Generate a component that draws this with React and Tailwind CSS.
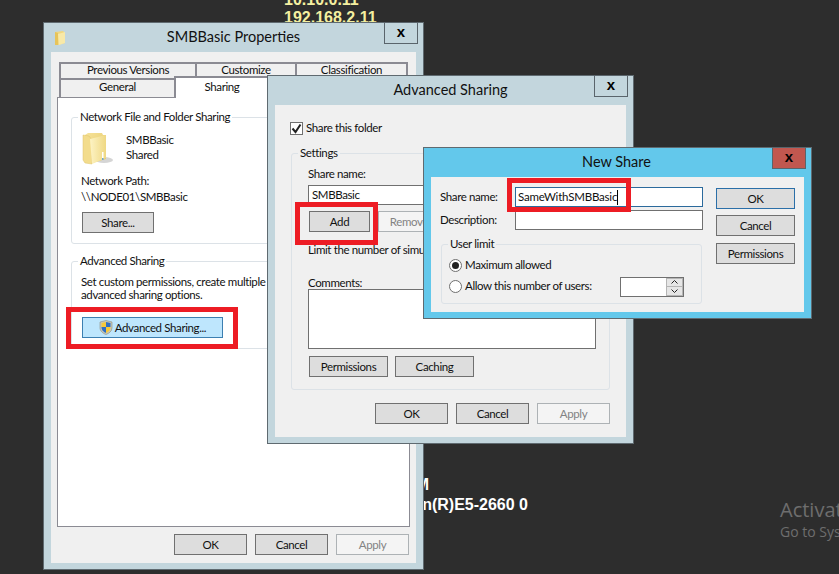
const Btn = ({ children, className = "", disabled, blue, focus }) => {
  let look = "border-[#707070] bg-[#dddddd] text-[#111]";
  if (disabled) look = "border-[#adb2b5] bg-[#f4f4f4] text-[#838383]";
  if (blue) look = "border-[#3c7fb1] bg-[#bee6fd] text-[#111]";
  if (focus) look = "border-[#2b6fa8] bg-[#dddddd] text-[#111]";
  return (
    <div className={`flex h-[21px] items-center justify-center border pt-px text-[11.5px] leading-none ${look} ${className}`}>
      {children}
    </div>
  );
};

const Group = ({ title, bg, className = "", children }) => (
  <div className={`relative rounded-[3px] border border-[#dce2e7] ${className}`}>
    <span className={`absolute -top-[9px] left-[6px] px-[2px] text-[11.5px] leading-[15px] text-[#111] ${bg}`}>{title}</span>
    {children}
  </div>
);

const CloseBtn = ({ red }) => (
  <div
    className={`absolute -top-px right-[5px] flex h-[22px] w-[34px] items-start justify-center border border-[#5a646b] font-['Liberation_Sans',sans-serif] text-[15px] font-bold leading-[18px] text-black ${
      red ? "bg-[#c1574f]" : "bg-[#c3d6dd]"
    }`}
  >
    x
  </div>
);

const Win = ({ className, title, titleClass, bar = "bg-[#c3d6dd]", red, children }) => (
  <div className={`absolute flex flex-col border border-[#5f6a70] ${bar} ${className}`}>
    <div className={`flex h-[29px] shrink-0 items-center justify-center pb-[2px] text-[14.5px] text-[#111] ${titleClass}`}>{title}</div>
    <CloseBtn red={red} />
    <div className="mx-[7px] mb-[6px] flex-1 bg-[#f0f0f0] tracking-[-0.38px]">{children}</div>
  </div>
);

const Folder = () => (
  <svg width="32" height="34" viewBox="0 0 32 34">
    <defs>
      <linearGradient id="fb" x1="0" x2="1" y1="0" y2="1">
        <stop offset="0" stopColor="#f7e39a" />
        <stop offset="1" stopColor="#e3c868" />
      </linearGradient>
      <linearGradient id="ff" x1="0" x2="1" y1="0" y2="0">
        <stop offset="0" stopColor="#fdf3c4" />
        <stop offset="1" stopColor="#efd883" />
      </linearGradient>
    </defs>
    <ellipse cx="22" cy="28" rx="9" ry="3" fill="#d5d5d5" />
    <path d="M3 3 L6 1 H20 L21 3 H24 V27 L10 31 H3 Z" fill="url(#fb)" />
    <path d="M1 3 L7 4 L10 8 V32 L3 31 L1 28 Z" fill="#f3dc8c" stroke="#dcc36c" strokeWidth=".5" />
    <path d="M8 7 L24 3 V26 L10 32 Z" fill="url(#ff)" />
    <rect x="20" y="20" width="1.5" height="6" fill="#fff" />
    <rect x="20" y="26" width="1.5" height="2" fill="#6aa6d8" />
  </svg>
);

const Shield = () => (
  <svg width="14" height="15" viewBox="0 0 14 15" className="mr-[2px] -mt-px">
    <path d="M7 .5 L13 2 V8 C13 11 10 13.5 7 14.5 C4 13.5 1 11 1 8 V2 Z" fill="#c9c9b8" stroke="#8d8d80" strokeWidth=".6" />
    <path d="M7 2 L11.5 3 V7 H7 Z" fill="#2f6fc4" />
    <path d="M7 2 L2.5 3 V7 H7 Z" fill="#f6c93a" />
    <path d="M2.5 7 H7 V13 C5 12 2.5 10.5 2.5 7 Z" fill="#2f6fc4" />
    <path d="M11.5 7 H7 V13 C9 12 11.5 10.5 11.5 7 Z" fill="#f6c93a" />
  </svg>
);

const Radio = ({ on }) => (
  <span className="flex h-[13px] w-[13px] shrink-0 items-center justify-center rounded-full border border-[#707070] bg-white">
    {on && <span className="h-[7px] w-[7px] rounded-full bg-[#222]" />}
  </span>
);

const Tab = ({ children, className = "", active }) => (
  <div
    className={`flex items-center justify-center border-[2px] border-b-0 border-r-0 border-[#8b8b93] text-[11.5px] leading-none text-[#111] ${
      active ? "bg-white" : "bg-[#f0f0f0]"
    } ${className}`}
  >
    {children}
  </div>
);

const RedBox = ({ className }) => <div className={`absolute z-40 border-[5px] border-[#ed1c24] ${className}`} />;

export default function App() {
  return (
    <div className="relative h-[574px] w-[839px] overflow-hidden bg-[#2d2d2d] font-['Lato',sans-serif]">
      {/* desktop info text */}
      <div className="absolute -top-[9px] left-[284px] font-['Liberation_Sans',sans-serif] text-[16px] font-bold leading-[18px] text-[#f4efa0]">
        <div>10.10.0.11</div>
        <div>192.168.2.11</div>
      </div>
      <div className="absolute left-[240px] top-[475px] w-[288px] font-['Liberation_Sans',sans-serif] text-[16px] font-bold leading-[20px] text-white">
        <div className="w-[189px] text-right">8 GB RAM</div>
        <div className="text-right">Intel(R) Xeon(R)E5-2660 0</div>
      </div>
      <div className="absolute left-[780px] top-[498px] whitespace-nowrap font-['Open_Sans',sans-serif] text-[#6e6e6e]">
        <div className="text-[20px] leading-[24px]">Activate Windows</div>
        <div className="text-[14px] leading-[19px]">Go to System in Control Panel</div>
      </div>

      {/* SMBBasic Properties */}
      <Win className="left-[43px] top-[22px] h-[548px] w-[381px] z-10" title="SMBBasic Properties">
        <svg width="14" height="16" viewBox="0 0 14 16" className="absolute left-[10px] top-[7px]">
          <path d="M1 2 L9 1 L11 3 V13 L4 15 H1 Z" fill="#f1d77e" />
          <path d="M4 4 L11 2 V13 L5 15 Z" fill="#f8e9a8" />
          <path d="M1 2 L4 3 V15 H1 Z" fill="#e7c45a" />
        </svg>
        <div className="px-[6px] pt-[10px]">
          <div className="ml-[2px] flex h-[16px]">
            <Tab className="w-[136px] pb-[2px]">Previous Versions</Tab>
            <Tab className="w-[100px] pb-[2px]">Customize</Tab>
            <Tab className="w-[113px] border-r-[2px] pb-[2px]">Classification</Tab>
          </div>
          <div className="relative z-10 ml-[2px] flex h-[19px]">
            <Tab className="w-[115px] pb-[3px]">General</Tab>
            <Tab active className="-mt-[2px] h-[22px] w-[94px] pb-[3px]">Sharing</Tab>
          </div>
          <div className="h-[430px] border-[1.5px] border-[#8b8b93] bg-white pl-[13px] pr-[10px] pt-[19px]">
            <Group title="Network File and Folder Sharing" bg="bg-white" className="h-[127px] px-[10px] text-[11.5px] leading-[15px] text-[#111]">
              <div className="flex h-[42px] pt-[14px]">
                <Folder />
                <div className="ml-[12px]">
                  <div>SMBBasic</div>
                  <div>Shared</div>
                </div>
              </div>
              <div className="-ml-px mt-[13px]">Network Path:</div>
              <div className="-ml-px mt-px">\\NODE01\SMBBasic</div>
              <Btn className="mt-[8px] w-[72px]">Share...</Btn>
            </Group>
            <Group title="Advanced Sharing" bg="bg-white" className="mt-[17px] h-[88px] px-[10px] pt-[13px] text-[11.5px] leading-[13px] text-[#111]">
              <div className="-ml-px whitespace-nowrap">Set custom permissions, create multiple</div>
              <div className="-ml-px">advanced sharing options.</div>
              <Btn blue className="mt-[16px] w-[141px]">
                <Shield />
                Advanced Sharing...
              </Btn>
            </Group>
          </div>
          <div className="mt-[7px] flex justify-end gap-[8px] pr-[1px]">
            <Btn className="w-[73px]">OK</Btn>
            <Btn className="w-[73px]">Cancel</Btn>
            <Btn className="w-[73px]" disabled>Apply</Btn>
          </div>
        </div>
      </Win>

      {/* Advanced Sharing */}
      <Win className="left-[267px] top-[75px] h-[369px] w-[367px] z-20" title="Advanced Sharing">
        <div className="pl-[15px] pr-[16px] pt-[17px]">
          <div className="flex h-[13px] items-center text-[11.5px] text-[#111]">
            <span className="flex h-[13px] w-[13px] items-center justify-center border border-[#707070] bg-white">
              <svg width="11" height="11" viewBox="0 0 11 11">
                <path d="M1.5 5.5 L4.5 9 L9.5 1.5" fill="none" stroke="#222" strokeWidth="2" />
              </svg>
            </span>
            <span className="ml-[3px] pb-[2px]">Share this folder</span>
          </div>
          <Group title="Settings" bg="bg-[#f0f0f0]" className="ml-px mt-[18px] h-[237px] pl-[16px] pr-[13px] pt-[12px] text-[11.5px] leading-[15px] text-[#111]">
            <div>Share name:</div>
            <div className="mt-[4px] flex h-[20px] items-center border border-[#707070] bg-white pb-[2px] pl-[3px]">SMBBasic</div>
            <div className="ml-px mt-[6px] flex gap-[8px]">
              <Btn className="w-[61px]">Add</Btn>
              <Btn className="w-[62px]" disabled>Remove</Btn>
            </div>
            <div className="mt-[10px] whitespace-nowrap">Limit the number of simultaneous users to:</div>
            <div className="mt-[18px]">Comments:</div>
            <div className="-mt-[1px] h-[60px] border border-[#707070] bg-white" />
            <div className="ml-px mt-[7px] flex gap-[7px]">
              <Btn className="w-[79px]">Permissions</Btn>
              <Btn className="w-[79px]">Caching</Btn>
            </div>
          </Group>
          <div className="mt-[13px] flex justify-end gap-[8px]">
            <Btn className="w-[73px]">OK</Btn>
            <Btn className="w-[73px]">Cancel</Btn>
            <Btn className="w-[73px]" disabled>Apply</Btn>
          </div>
        </div>
      </Win>

      {/* New Share */}
      <Win className="left-[423px] top-[147px] h-[172px] w-[389px] z-30" bar="bg-[#63c8eb]" title="New Share" titleClass="pr-[2px]" red>
        <div className="flex gap-[13px] px-[9px] pt-[10px] text-[11.5px] leading-[15px] text-[#111]">
          <div className="w-[263px]">
            <div className="flex h-[20px] items-center">
              <span className="w-[75px] pb-[2px]">Share name:</span>
              <div className="flex h-[20px] flex-1 items-center border border-[#2b6a9c] bg-white pl-[2px] tracking-[-0.2px]">
                <span className="pb-[2px]">SameWithSMBBasic</span>
                <span className="h-[15px] w-px bg-black" />
              </div>
            </div>
            <div className="mt-[3px] flex h-[20px] items-center">
              <span className="w-[75px] pb-[2px]">Description:</span>
              <div className="h-[20px] flex-1 border border-[#707070] bg-white" />
            </div>
            <Group title="User limit" bg="bg-[#f0f0f0]" className="ml-px mr-px mt-[14px] h-[60px] pl-[7px] pt-[13px]">
              <div className="flex h-[15px] items-center gap-[3px]">
                <Radio on />
                <span className="pb-[2px]">Maximum allowed</span>
              </div>
              <div className="mt-[6px] flex h-[15px] items-center gap-[3px]">
                <Radio />
                <span className="w-[149px] whitespace-nowrap pb-[2px]">Allow this number of users:</span>
                <div className="ml-[3px] flex h-[20px] w-[64px] shrink-0 border border-[#707070] bg-white">
                  <div className="flex-1" />
                  <div className="flex w-[17px] flex-col gap-px bg-[#b5b5b5] p-px text-[#111]">
                    <span className="flex flex-1 items-center justify-center bg-[#e6e6e6]">
                      <svg width="7" height="4" viewBox="0 0 7 4"><path d="M.5 3.5 L3.5 .5 L6.5 3.5" fill="none" stroke="#222" /></svg>
                    </span>
                    <span className="flex flex-1 items-center justify-center bg-[#e6e6e6]">
                      <svg width="7" height="4" viewBox="0 0 7 4"><path d="M.5 .5 L3.5 3.5 L6.5 .5" fill="none" stroke="#222" /></svg>
                    </span>
                  </div>
                </div>
              </div>
            </Group>
          </div>
          <div className="w-[79px] pt-px">
            <Btn focus>OK</Btn>
            <Btn className="mt-[6px]">Cancel</Btn>
            <Btn className="mt-[7px]">Permissions</Btn>
          </div>
        </div>
      </Win>

      <RedBox className="left-[66px] top-[307px] h-[42px] w-[172px]" />
      <RedBox className="left-[295px] top-[202px] h-[43px] w-[83px]" />
      <RedBox className="left-[507px] top-[178px] h-[34px] w-[124px]" />
    </div>
  );
}
